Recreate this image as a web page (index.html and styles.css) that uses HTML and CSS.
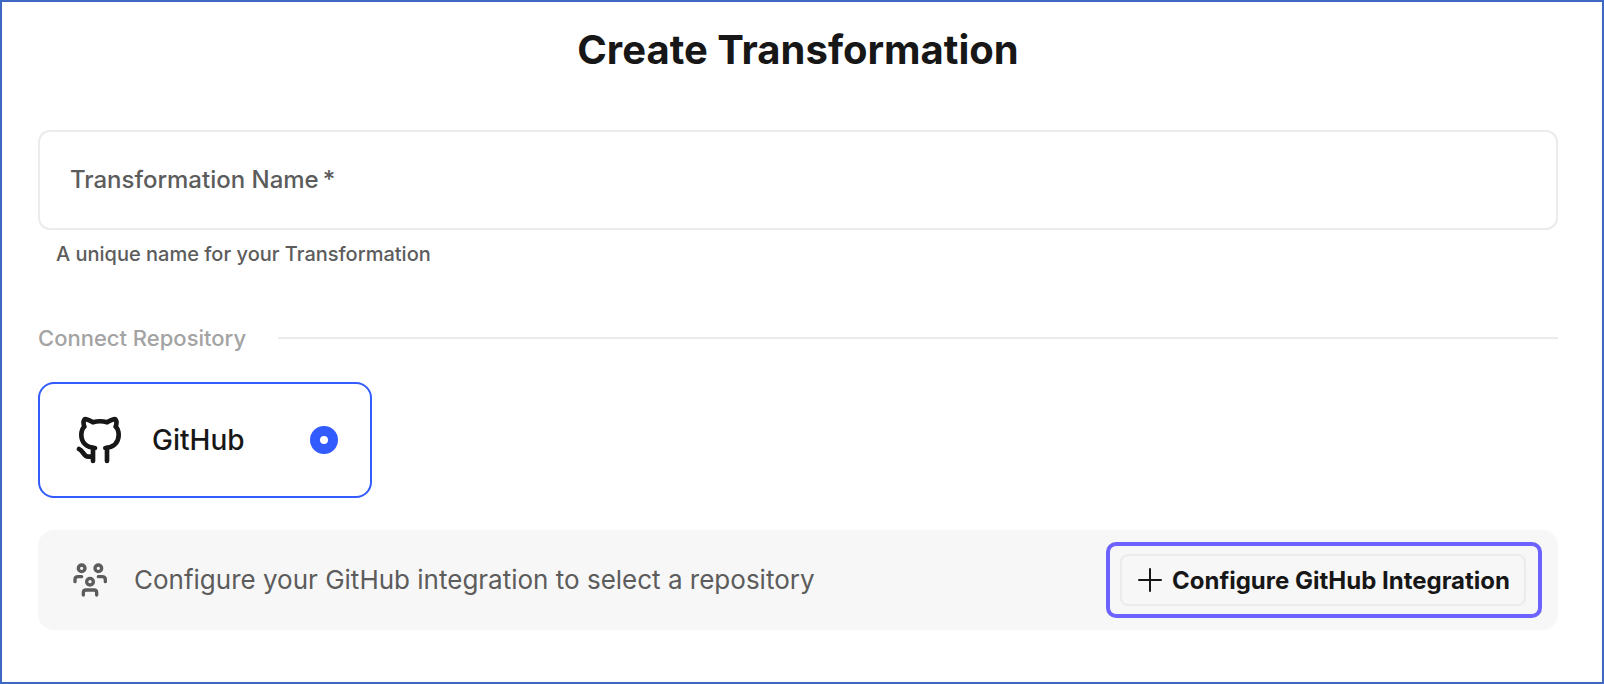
FILE: index.html
```html
<!DOCTYPE html>
<html lang="en">
<head>
<meta charset="utf-8">
<title>Create Transformation</title>
<link rel="stylesheet" href="styles.css">
</head>
<body>
<main class="page">
  <h1 class="title">Create Transformation</h1>
  <form class="form">
    <div class="field">
      <div class="field-box">
        <label class="field-label" for="name">Transformation Name&thinsp;*</label>
        <input class="field-input" id="name" type="text" required aria-describedby="name-help">
      </div>
      <p class="field-help" id="name-help">A unique name for your Transformation</p>
    </div>
    <h2 class="section">Connect Repository</h2>
    <label class="provider" for="github">
      <svg class="provider-icon" viewBox="0 0 144 144" aria-hidden="true">
        <path d="M51 135V95M9 99C22 103 22 122 37 122H51M93 135V95M57 96C33 94 16 81 16 57C16 47 18 38 25 32C22 24 22 16 25 11C26 9 28 9 31 10C38 12 45 15 51 19C64 15 80 15 93 19C99 15 106 12 113 10C116 9 118 9 119 11C122 16 122 24 119 32C126 38 128 47 128 57C128 81 111 94 88 96"/>
      </svg>
      <span class="provider-name">GitHub</span>
      <input class="provider-radio" id="github" type="radio" name="provider" checked>
    </label>
    <div class="notice">
      <svg class="notice-icon" viewBox="0 0 120 120" aria-hidden="true">
        <circle cx="35" cy="25" r="10"/>
        <circle cx="85" cy="25" r="10"/>
        <circle cx="60" cy="65" r="10"/>
        <path d="M15 65V59Q15 50 24 50H35M85 50H96Q106 50 106 59V65M40 105V98Q40 90 48 90H72Q80 90 80 98V105"/>
      </svg>
      <p class="notice-text">Configure your GitHub integration to select a repository</p>
      <div class="highlight">
        <button class="button" type="button">
          <svg class="button-icon" viewBox="0 0 24 24" aria-hidden="true"><path d="M12 1V23M1 12H23"/></svg>
          Configure GitHub Integration
        </button>
      </div>
    </div>
  </form>
</main>
</body>
</html>
```
FILE: styles.css
```css
* { box-sizing: border-box; }

body {
  margin: 0;
  background: #fff;
  color: #171717;
  font-family: Inter, "Liberation Sans", sans-serif;
}

.page {
  min-height: 100vh;
  padding: 24px 44px 24px 36px;
  border: 2px solid #3d69c2;
}

.title {
  margin: 0 0 56px;
  font-size: 40px;
  line-height: 48px;
  font-weight: 700;
  text-align: center;
}

.field-box {
  display: flex;
  align-items: center;
  height: 100px;
  padding: 0 30px;
  border: 2px solid #ebebeb;
  border-radius: 12px;
}

.field-label {
  color: #5c5c5c;
  font-size: 24px;
  line-height: 32px;
  font-weight: 500;
}

.field-input {
  flex: 1;
  min-width: 0;
  height: 64px;
  padding: 0 16px;
  border: 0;
  outline: 0;
  background: transparent;
  font: inherit;
  font-size: 24px;
}

.field-help {
  margin: 8px 18px 0;
  color: #5c5c5c;
  font-size: 20px;
  line-height: 32px;
  font-weight: 500;
}

.section {
  display: flex;
  align-items: center;
  gap: 32px;
  margin: 52px 0 28px;
  color: #a3a3a3;
  font-size: 22px;
  line-height: 32px;
  font-weight: 500;
}

.section::after {
  content: "";
  flex: 1;
  height: 2px;
  background: #ebebeb;
}

.provider {
  display: flex;
  align-items: center;
  gap: 28px;
  width: 334px;
  height: 116px;
  padding: 0 32px 0 36px;
  border: 2px solid #335cff;
  border-radius: 16px;
}

.provider-icon {
  width: 48px;
  height: 48px;
  fill: none;
  stroke: #171717;
  stroke-width: 14;
  stroke-linecap: round;
  stroke-linejoin: round;
}

.provider-name {
  flex: 1;
  font-size: 28px;
  line-height: 40px;
  font-weight: 500;
}

.provider-radio {
  appearance: none;
  width: 28px;
  height: 28px;
  margin: 0;
  border: 10px solid #335cff;
  border-radius: 50%;
  background: #fff;
}

.notice {
  display: flex;
  align-items: center;
  gap: 24px;
  height: 100px;
  margin-top: 32px;
  padding: 0 16px 0 32px;
  border-radius: 16px;
  background: #f7f7f7;
}

.notice-icon {
  width: 40px;
  height: 40px;
  fill: none;
  stroke: #5c5c5c;
  stroke-width: 10;
  stroke-linecap: round;
  stroke-linejoin: round;
}

.notice-text {
  flex: 1;
  margin: 0;
  color: #5c5c5c;
  font-size: 26px;
  line-height: 36px;
}

.highlight {
  padding: 8px 12px 8px 10px;
  border: 4px solid #6c63ff;
  border-radius: 10px;
}

.button {
  display: flex;
  align-items: center;
  gap: 10px;
  height: 52px;
  padding: 0 14px 0 16px;
  border: 2px solid #ebebeb;
  border-radius: 8px;
  background: transparent;
  color: #171717;
  font: inherit;
  font-size: 24px;
  font-weight: 700;
  white-space: nowrap;
}

.button-icon {
  width: 24px;
  height: 24px;
  fill: none;
  stroke: #171717;
  stroke-width: 2;
  stroke-linecap: round;
}
```
